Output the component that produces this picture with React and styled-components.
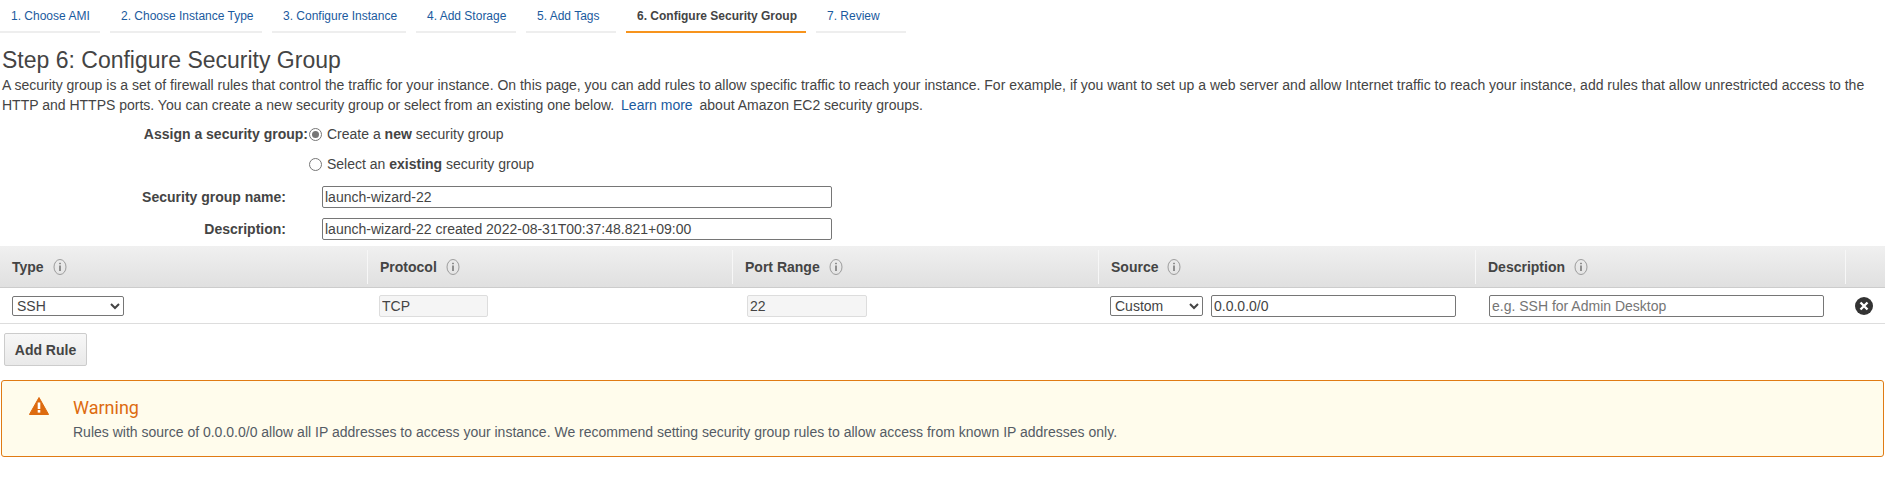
import React from "react";
import styled, { createGlobalStyle } from "styled-components";

const GlobalStyle = createGlobalStyle`
  html, body {
    margin: 0;
    background: #fff;
    font-family: "Liberation Sans", Arial, sans-serif;
    font-size: 14px;
    color: #444;
  }
`;

const Page = styled.div`
  width: 1892px;
  height: 487px;
  overflow: hidden;
`;

const Tabs = styled.ul`
  display: flex;
  gap: 10px;
  list-style: none;
  margin: 0;
  padding: 0;
  height: 33px;
`;

const Tab = styled.li`
  box-sizing: border-box;
  height: 33px;
  padding: 9px 11px 0;
  font-size: 12px;
  line-height: 14px;
  white-space: nowrap;
  color: ${(p) => (p.$active ? "#444" : "#1a5a9e")};
  font-weight: ${(p) => (p.$active ? "bold" : "normal")};
  border-bottom: 2px solid ${(p) => (p.$active ? "#f7941d" : "#eee")};
  width: ${(p) => p.$width}px;
`;

const Title = styled.h1`
  margin: 12px 0 0 2px;
  font-size: 23px;
  line-height: 30px;
  font-weight: normal;
  color: #444;
`;

const Intro = styled.p`
  margin: 0 0 0 2px;
  width: 1885px;
  font-size: 14px;
  line-height: 20px;
  color: #444;
`;

const LearnMore = styled.a`
  color: #1a5a9e;
  margin: 0 3px 0 3px;
`;

const Form = styled.div`
  display: flex;
  flex-direction: column;
  margin-top: 4px;
`;

const RadioRow = styled.div`
  display: flex;
  align-items: center;
  height: 30px;
`;

const FormLabel = styled.label`
  width: ${(p) => p.$width}px;
  text-align: right;
  font-weight: bold;
  font-size: 14px;
  color: #444;
  flex-shrink: 0;
`;

const Radio = styled.span`
  box-sizing: border-box;
  width: 13px;
  height: 13px;
  margin-left: ${(p) => p.$offset}px;
  margin-right: 5px;
  border-radius: 50%;
  border: 1px solid #767676;
  background: #fff;
  display: flex;
  align-items: center;
  justify-content: center;

  &::after {
    content: "";
    display: ${(p) => (p.$checked ? "block" : "none")};
    width: 7px;
    height: 7px;
    border-radius: 50%;
    background: #757575;
  }
`;

const RadioText = styled.span`
  font-size: 14px;
  color: #444;
`;

const FieldRow = styled.div`
  display: flex;
  align-items: center;
  height: 22px;
  margin-top: ${(p) => p.$top}px;
`;

const TextInput = styled.input`
  box-sizing: border-box;
  width: ${(p) => p.$width}px;
  height: ${(p) => p.$height || 22}px;
  margin-left: ${(p) => p.$left || 0}px;
  padding: 0 2px;
  border: 1px solid ${(p) => (p.disabled ? "#ddd" : "#767676")};
  border-radius: 2px;
  background: ${(p) => (p.disabled ? "#f5f5f5" : "#fff")};
  font-family: "Liberation Sans", Arial, sans-serif;
  font-size: 14px;
  color: #444;
  opacity: 1;

  &::placeholder {
    color: #757575;
  }
`;

const Table = styled.div`
  margin-top: 6px;
  width: 1885px;
`;

const columns = "367px 365px 366px 377px 370px 40px";

const HeadRow = styled.div`
  display: grid;
  grid-template-columns: ${columns};
  height: 42px;
  box-sizing: border-box;
  align-items: center;
  background: linear-gradient(#f0f0f0, #e0e0e0);
  border-bottom: 1px solid #ccc;
`;

const HeadCell = styled.div`
  display: flex;
  align-items: center;
  gap: 9px;
  box-sizing: border-box;
  height: 34px;
  padding-left: 12px;
  font-size: 14px;
  font-weight: bold;
  color: #444;
  border-left: ${(p) => (p.$first ? "none" : "1px solid #f7f7f7")};
`;

const BodyRow = styled.div`
  display: grid;
  grid-template-columns: ${columns};
  height: 36px;
  box-sizing: border-box;
  align-items: center;
  border-bottom: 1px solid #ddd;
  padding-top: 1px;
`;

const BodyCell = styled.div`
  display: flex;
  align-items: center;
  padding-left: ${(p) => p.$pad}px;
`;

const Select = styled.select`
  box-sizing: border-box;
  width: ${(p) => p.$width}px;
  height: 20px;
  padding: 0;
  border: 1px solid #767676;
  border-radius: 2px;
  background: #fff;
  font-family: "Liberation Sans", Arial, sans-serif;
  font-size: 14px;
  color: #444;
`;

const AddRule = styled.button`
  display: block;
  box-sizing: border-box;
  width: 83px;
  height: 33px;
  margin: 9px 0 0 4px;
  padding: 0;
  border: 1px solid #ccc;
  border-radius: 2px;
  background: linear-gradient(#f7f7f7, #e9e9e9);
  font-family: "Liberation Sans", Arial, sans-serif;
  font-size: 14px;
  font-weight: bold;
  color: #444;
`;

const Alert = styled.div`
  box-sizing: border-box;
  display: flex;
  width: 1883px;
  height: 77px;
  margin: 14px 0 0 1px;
  padding: 15px 0 0 27px;
  border: 1px solid #e07b14;
  border-radius: 3px;
  background: #fffcec;
`;

const AlertBody = styled.div`
  margin-left: 24px;
`;

const AlertTitle = styled.div`
  font-family: Roboto, "Liberation Sans", sans-serif;
  font-size: 18px;
  line-height: 24px;
  color: #dd6b10;
`;

const AlertText = styled.div`
  font-family: "Liberation Sans", Arial, sans-serif;
  font-size: 14px;
  line-height: 20px;
  margin-top: 2px;
  color: #545b64;
`;

const InfoIcon = () => (
  <svg width="14" height="18" viewBox="0 0 14 18">
    <ellipse cx="7" cy="9" rx="6" ry="7.5" fill="none" stroke="#888" strokeWidth="0.8" />
    <rect x="6.4" y="7.5" width="1.2" height="5.5" fill="#555" />
    <rect x="6.4" y="4.8" width="1.2" height="1.4" fill="#555" />
  </svg>
);

const RemoveIcon = () => (
  <svg width="18" height="18" viewBox="0 0 18 18">
    <circle cx="9" cy="9" r="9" fill="#333" />
    <path d="M5.5 5.5l7 7M12.5 5.5l-7 7" stroke="#fff" strokeWidth="2.4" />
  </svg>
);

const WarningIcon = () => (
  <svg width="20" height="18" viewBox="0 0 20 18" style={{ flexShrink: 0, marginTop: 1 }}>
    <path d="M10 0.5 L19.6 17.5 H0.4 Z" fill="#dd6b10" stroke="#dd6b10" strokeLinejoin="round" />
    <rect x="8.7" y="5.5" width="2.6" height="6.5" fill="#fff" />
    <rect x="8.7" y="13" width="2.6" height="2.6" fill="#fff" />
  </svg>
);

const tabs = [
  ["1. Choose AMI", 100],
  ["2. Choose Instance Type", 152],
  ["3. Configure Instance", 134],
  ["4. Add Storage", 100],
  ["5. Add Tags", 90],
  ["6. Configure Security Group", 180, true],
  ["7. Review", 90],
];

const headers = ["Type", "Protocol", "Port Range", "Source", "Description"];

export default function App() {
  return (
    <Page>
      <GlobalStyle />
      <Tabs>
        {tabs.map(([label, width, active]) => (
          <Tab key={label} $width={width} $active={active}>
            {label}
          </Tab>
        ))}
      </Tabs>
      <Title>Step 6: Configure Security Group</Title>
      <Intro>
        A security group is a set of firewall rules that control the traffic for your instance. On this page, you can
        add rules to allow specific traffic to reach your instance. For example, if you want to set up a web server and
        allow Internet traffic to reach your instance, add rules that allow unrestricted access to the HTTP and HTTPS
        ports. You can create a new security group or select from an existing one below.
        <LearnMore> Learn more</LearnMore> about Amazon EC2 security groups.
      </Intro>
      <Form>
        <RadioRow>
          <FormLabel $width={308}>Assign a security group:</FormLabel>
          <Radio $offset={1} $checked />
          <RadioText>
            Create a <b>new</b> security group
          </RadioText>
        </RadioRow>
        <RadioRow>
          <FormLabel $width={308} />
          <Radio $offset={1} />
          <RadioText>
            Select an <b>existing</b> security group
          </RadioText>
        </RadioRow>
        <FieldRow $top={7}>
          <FormLabel $width={286}>Security group name:</FormLabel>
          <TextInput $left={36} $width={510} defaultValue="launch-wizard-22" />
        </FieldRow>
        <FieldRow $top={10}>
          <FormLabel $width={286}>Description:</FormLabel>
          <TextInput $left={36} $width={510} defaultValue="launch-wizard-22 created 2022-08-31T00:37:48.821+09:00" />
        </FieldRow>
      </Form>
      <Table>
        <HeadRow>
          {headers.map((h, i) => (
            <HeadCell key={h} $first={i === 0}>
              {h} <InfoIcon />
            </HeadCell>
          ))}
          <HeadCell />
        </HeadRow>
        <BodyRow>
          <BodyCell $pad={12}>
            <Select $width={112} defaultValue="SSH">
              <option>SSH</option>
            </Select>
          </BodyCell>
          <BodyCell $pad={12}>
            <TextInput disabled $width={109} defaultValue="TCP" />
          </BodyCell>
          <BodyCell $pad={15}>
            <TextInput disabled $width={120} defaultValue="22" />
          </BodyCell>
          <BodyCell $pad={12}>
            <Select $width={93} defaultValue="Custom">
              <option>Custom</option>
            </Select>
            <TextInput $left={8} $width={245} defaultValue="0.0.0.0/0" />
          </BodyCell>
          <BodyCell $pad={14}>
            <TextInput $width={335} placeholder="e.g. SSH for Admin Desktop" />
          </BodyCell>
          <BodyCell $pad={10}>
            <RemoveIcon />
          </BodyCell>
        </BodyRow>
      </Table>
      <AddRule>Add Rule</AddRule>
      <Alert>
        <WarningIcon />
        <AlertBody>
          <AlertTitle>Warning</AlertTitle>
          <AlertText>
            Rules with source of 0.0.0.0/0 allow all IP addresses to access your instance. We recommend setting security
            group rules to allow access from known IP addresses only.
          </AlertText>
        </AlertBody>
      </Alert>
    </Page>
  );
}
